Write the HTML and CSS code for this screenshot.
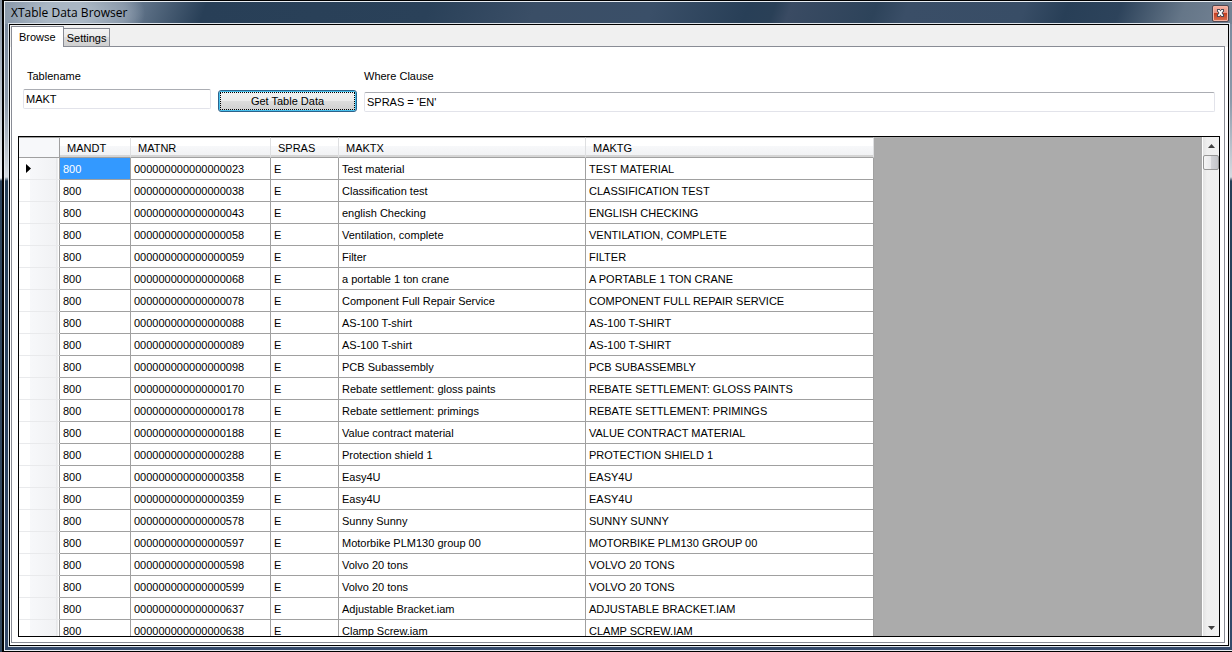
FILE: index.html
```
<!DOCTYPE html>
<html lang="en">
<head>
<meta charset="utf-8">
<title>XTable Data Browser</title>
<link rel="stylesheet" href="styles.css">
</head>
<body>
<div class="desktop">
<main class="window">
  <header class="titlebar">
    <h1 class="title">XTable Data Browser</h1>
    <button class="close" type="button" aria-label="Close">
      <svg width="9" height="8" viewBox="0 0 9 8"><path d="M1 0h3v1h1V0h3v3H7v2h1v3H5V7H4v1H1V5h1V3H1z" fill="#4c4a55"/><path d="M2 1h1.500l1 1.500 1-1.500H7v1L5.500 4 7 6v1H5.500l-1-1.500-1 1.500H2V6l1.500-2L2 2z" fill="#fff"/></svg>
    </button>
  </header>
  <div class="client">
    <nav class="tabs" role="tablist">
      <button class="tab tab-active" type="button" role="tab" aria-selected="true">Browse</button>
      <button class="tab" type="button" role="tab" aria-selected="false">Settings</button>
    </nav>
    <section class="page">
      <form class="query">
        <div class="field">
          <label class="label" for="tablename">Tablename</label>
          <input class="text" id="tablename" type="text" value="MAKT">
        </div>
        <button class="get" type="button"><span class="get-focus">Get Table Data</span></button>
        <div class="field field-where">
          <label class="label label-where" for="where">Where Clause</label>
          <input class="text" id="where" type="text" value="SPRAS = 'EN'">
        </div>
      </form>
      <div class="grid">
        <div class="grid-view">
          <table class="data">
            <colgroup><col class="c-head"><col class="c-mandt"><col class="c-matnr"><col class="c-spras"><col class="c-maktx"><col class="c-maktg"></colgroup>
            <thead><tr><th></th><th>MANDT</th><th>MATNR</th><th>SPRAS</th><th>MAKTX</th><th>MAKTG</th></tr></thead>
            <tbody>
<tr><td class="rowhead"><svg class="marker" width="5" height="9" viewBox="0 0 5 9"><path d="M0 0l5 4.500L0 9z"/></svg></td><td class="selected">800</td><td>000000000000000023</td><td>E</td><td>Test material</td><td>TEST MATERIAL</td></tr>
<tr><td class="rowhead"></td><td>800</td><td>000000000000000038</td><td>E</td><td>Classification test</td><td>CLASSIFICATION TEST</td></tr>
<tr><td class="rowhead"></td><td>800</td><td>000000000000000043</td><td>E</td><td>english Checking</td><td>ENGLISH CHECKING</td></tr>
<tr><td class="rowhead"></td><td>800</td><td>000000000000000058</td><td>E</td><td>Ventilation, complete</td><td>VENTILATION, COMPLETE</td></tr>
<tr><td class="rowhead"></td><td>800</td><td>000000000000000059</td><td>E</td><td>Filter</td><td>FILTER</td></tr>
<tr><td class="rowhead"></td><td>800</td><td>000000000000000068</td><td>E</td><td>a portable 1 ton crane</td><td>A PORTABLE 1 TON CRANE</td></tr>
<tr><td class="rowhead"></td><td>800</td><td>000000000000000078</td><td>E</td><td>Component Full Repair Service</td><td>COMPONENT FULL REPAIR SERVICE</td></tr>
<tr><td class="rowhead"></td><td>800</td><td>000000000000000088</td><td>E</td><td>AS-100 T-shirt</td><td>AS-100 T-SHIRT</td></tr>
<tr><td class="rowhead"></td><td>800</td><td>000000000000000089</td><td>E</td><td>AS-100 T-shirt</td><td>AS-100 T-SHIRT</td></tr>
<tr><td class="rowhead"></td><td>800</td><td>000000000000000098</td><td>E</td><td>PCB Subassembly</td><td>PCB SUBASSEMBLY</td></tr>
<tr><td class="rowhead"></td><td>800</td><td>000000000000000170</td><td>E</td><td>Rebate settlement: gloss paints</td><td>REBATE SETTLEMENT: GLOSS PAINTS</td></tr>
<tr><td class="rowhead"></td><td>800</td><td>000000000000000178</td><td>E</td><td>Rebate settlement: primings</td><td>REBATE SETTLEMENT: PRIMINGS</td></tr>
<tr><td class="rowhead"></td><td>800</td><td>000000000000000188</td><td>E</td><td>Value contract material</td><td>VALUE CONTRACT MATERIAL</td></tr>
<tr><td class="rowhead"></td><td>800</td><td>000000000000000288</td><td>E</td><td>Protection shield 1</td><td>PROTECTION SHIELD 1</td></tr>
<tr><td class="rowhead"></td><td>800</td><td>000000000000000358</td><td>E</td><td>Easy4U</td><td>EASY4U</td></tr>
<tr><td class="rowhead"></td><td>800</td><td>000000000000000359</td><td>E</td><td>Easy4U</td><td>EASY4U</td></tr>
<tr><td class="rowhead"></td><td>800</td><td>000000000000000578</td><td>E</td><td>Sunny Sunny</td><td>SUNNY SUNNY</td></tr>
<tr><td class="rowhead"></td><td>800</td><td>000000000000000597</td><td>E</td><td>Motorbike PLM130 group 00</td><td>MOTORBIKE PLM130 GROUP 00</td></tr>
<tr><td class="rowhead"></td><td>800</td><td>000000000000000598</td><td>E</td><td>Volvo 20 tons</td><td>VOLVO 20 TONS</td></tr>
<tr><td class="rowhead"></td><td>800</td><td>000000000000000599</td><td>E</td><td>Volvo 20 tons</td><td>VOLVO 20 TONS</td></tr>
<tr><td class="rowhead"></td><td>800</td><td>000000000000000637</td><td>E</td><td>Adjustable Bracket.iam</td><td>ADJUSTABLE BRACKET.IAM</td></tr>
<tr><td class="rowhead"></td><td>800</td><td>000000000000000638</td><td>E</td><td>Clamp Screw.iam</td><td>CLAMP SCREW.IAM</td></tr>
            </tbody>
          </table>
        </div>
        <div class="scroll">
          <button class="arrow" type="button" aria-label="Scroll up"><svg width="7" height="4" viewBox="0 0 7 4"><path d="M0 4h7L3.500 0z"/></svg></button>
          <div class="thumb"></div>
          <button class="arrow arrow-down" type="button" aria-label="Scroll down"><svg width="7" height="4" viewBox="0 0 7 4"><path d="M0 0h7L3.500 4z"/></svg></button>
        </div>
      </div>
    </section>
  </div>
</main>
</div>
</body>
</html>
```
FILE: styles.css
```
* { box-sizing: border-box; }

body {
  margin: 0;
  font: 11px/16px "Liberation Sans", Arial, sans-serif;
  color: #000;
}

button, input { font: inherit; color: inherit; }

.desktop {
  height: 100vh;
  padding-left: 2px;
  overflow: hidden;
  background: linear-gradient(#8492a3, #eef1f4 178px, #2c435b 181px, #34485f);
}

.window {
  display: flex;
  flex-direction: column;
  height: 100%;
  border: solid #000;
  border-width: 1px 0 1px 2px;
  padding: 0 0 5px 5px;
  background: linear-gradient(#76869a, #8d9aaa 100px, #d5dbe1 176px, #263f57 180px, #34496a);
  box-shadow: inset 1px 1px 0 #e8edf2, inset 0 -1px 0 #e8edf2;
}

.titlebar {
  display: flex;
  align-items: center;
  justify-content: space-between;
  height: 23px;
  flex: none;
  margin-left: -4px;
  padding: 0 3px 0 6px;
  border-top: 1px solid #e8edf2;
  background:
    radial-gradient(ellipse 80px 40px at 60px 11px, #aab7c4 30%, #8b9aab 75%, transparent),
    linear-gradient(110deg, #8796a8 0, #718398 110px, #283f57 190px, #2a4159 400px, #3a4e66 500px, #3a4f68 610px, #283f57 700px, #2a4057 725px, #3a4b63 740px, #2d435a 820px, #3a4e67 850px, #384d66 960px, #283f57 1000px, #2d435b 1050px, #657688 1110px, #7c8a9b 1190px, #687b90);
}

.title {
  margin: 0;
  font: 12px/20px "Open Sans", "Noto Sans", sans-serif;
}

.close {
  display: flex;
  align-items: center;
  justify-content: center;
  width: 17px;
  height: 17px;
  padding: 0;
  border: 1px solid #4e4650;
  border-radius: 2px;
  background: linear-gradient(#f4b2a4, #e88e7c 48%, #c23f22 50%, #dd7252);
  box-shadow: inset 0 0 0 1px #f5b5a5;
}

.client {
  display: flex;
  flex-direction: column;
  flex: 1;
  min-height: 0;
  margin-right: 3px;
  padding: 1px 3px 2px 1px;
  border: 1px solid #000;
  background: linear-gradient(#f0f0f0 22px, #fff 22px);
  box-shadow: 0 0 0 1px #dfe5eb;
}

.tabs {
  display: flex;
  align-items: flex-end;
  flex: none;
  height: 20px;
}

.tab {
  height: 18px;
  padding: 0 3px;
  border: 1px solid #898c95;
  border-width: 1px 1px 0 0;
  background: linear-gradient(#f3f3f3, #ebebeb 50%, #dcdcdc 50%, #cfcfcf);
}

.tab-active {
  position: relative;
  height: 21px;
  margin-bottom: -1px;
  padding: 0 7px 1px;
  border-left-width: 1px;
  background: #fff;
}

.page {
  display: flex;
  flex-direction: column;
  flex: 1;
  min-height: 0;
  padding: 21px 4px 5px 6px;
  border: 1px solid #898c95;
  background: #fff;
}

.query {
  display: flex;
  gap: 7px;
  padding: 0 5px;
  margin-bottom: 24px;
}

.field { display: flex; flex-direction: column; width: 188px; }
.field-where { flex: 1; }
.label { padding-left: 4px; margin-bottom: 5px; }
.label-where { padding-left: 0; margin-bottom: 8px; }

.text {
  width: 100%;
  height: 20px;
  padding: 0 2px;
  border: 1px solid #e2e3ea;
  border-top-color: #abadb3;
  border-radius: 2px;
  background: #fff;
}

.get {
  width: 139px;
  height: 22px;
  margin-top: 22px;
  padding: 1px;
  border: 1px solid #2c628b;
  border-radius: 3px;
  background: linear-gradient(#f2f2f2, #ebebeb 50%, #dddddd 50%, #cfcfcf);
  box-shadow: inset 0 0 0 1px #48c2ee;
}

.get-focus {
  display: block;
  height: 18px;
  border: 1px dotted #000;
  line-height: 17px;
}

.grid {
  display: flex;
  flex: 1;
  min-height: 0;
  border: 1px solid #000;
  background: #ababab;
}

.grid-view { flex: 1; min-width: 0; overflow: hidden; }

.data {
  width: 855px;
  table-layout: fixed;
  border-spacing: 0;
}

.c-head { width: 41px; }
.c-mandt { width: 71px; }
.c-matnr { width: 140px; }
.c-spras { width: 68px; }
.c-maktx { width: 247px; }
.c-maktg { width: 288px; }

.data th {
  height: 21px;
  padding: 0 7px;
  border-top: 1px solid #a0a0a0;
  border-right: 1px solid #dedfe1;
  border-bottom: 1px solid #a0a0a0;
  background: linear-gradient(#fff 40%, #f7f8fa 40%, #f1f2f4 90%, #d5d5d5 90%);
  font-weight: 400;
  text-align: left;
}

.data th:first-child { border-right-color: #a0a0a0; background: #f7f8fa; }

.data td {
  height: 22px;
  padding: 0 3px;
  border-right: 1px solid #a0a0a0;
  border-bottom: 1px solid #a0a0a0;
  background: #fff;
  white-space: nowrap;
}

.data .rowhead {
  padding: 0 7px;
  border-bottom-color: #e9eaec;
  background: linear-gradient(90deg, #fff 11px, #f7f8fa 11px, #f1f2f4 37px, #dcdddf 38px, #fff 39px);
}

.data .selected { background: #39f; color: #fff; }

.marker { display: block; }

.scroll {
  display: flex;
  flex-direction: column;
  width: 17px;
  border-left: 1px solid #fff;
  background: linear-gradient(90deg, #e3e3e3, #efefef 4px, #f0f0f0);
}

.arrow {
  display: flex;
  align-items: center;
  justify-content: center;
  height: 17px;
  padding: 0;
  border: 0;
  background: none;
  fill: #404040;
}

.arrow-down { margin-top: auto; }

.thumb {
  height: 15px;
  margin-top: 1px;
  border: 1px solid #979797;
  border-radius: 2px;
  background: linear-gradient(90deg, #f5f5f5, #e9e9eb 50%, #d3d4d8 50%, #c4c5c9);
}
```
